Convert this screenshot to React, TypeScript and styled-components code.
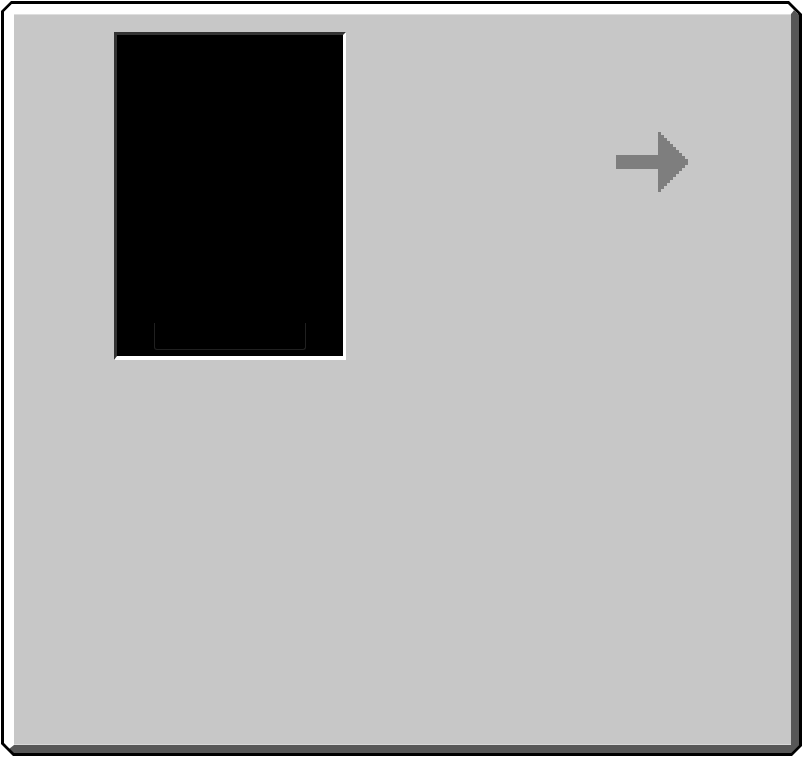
import styled, { createGlobalStyle } from "styled-components";

const GlobalStyle = createGlobalStyle`
  html, body {
    margin: 0;
    padding: 0;
    background: #ffffff;
    font-family: "Liberation Sans", Arial, sans-serif;
  }
`;

const Frame = styled.div`
  margin: 1px 0 0 1px;
  width: 801px;
  height: 755px;
  padding: 3px;
  box-sizing: border-box;
  background: #000000;
  clip-path: polygon(10px 0, calc(100% - 13px) 0, 100% 13px, 100% calc(100% - 10px), calc(100% - 10px) 100%, 12px 100%, 0 calc(100% - 12px), 0 10px);
`;

const Bevel = styled.div`
  width: 100%;
  height: 100%;
  box-sizing: border-box;
  border-style: solid;
  border-width: 10px 8px 8px 10px;
  border-color: #ffffff #575757 #575757 #ffffff;
  clip-path: polygon(8px 0, calc(100% - 11px) 0, 100% 11px, 100% calc(100% - 8px), calc(100% - 8px) 100%, 10px 100%, 0 calc(100% - 10px), 0 8px);
`;

const Panel = styled.div`
  width: 100%;
  height: 100%;
  box-sizing: border-box;
  background: #c7c7c7;
  border-top: 1px solid #dedede;
  border-bottom: 1px solid #d8d8d8;
  padding: 17px 0 0 100px;
  display: flex;
  align-items: flex-start;
`;

const Screen = styled.div`
  width: 232px;
  height: 328px;
  box-sizing: border-box;
  background: #000000;
  border-style: solid;
  border-width: 3px 3px 4px 3px;
  border-color: #333333 #ffffff #ffffff #333333;
  display: flex;
  flex-direction: column;
  justify-content: flex-end;
  align-items: center;
  padding-bottom: 6px;
`;

const Tray = styled.div`
  width: 152px;
  height: 27px;
  box-sizing: border-box;
  border: 1px solid #202020;
  border-top: none;
  border-radius: 0 0 3px 3px;
`;

const ArrowBox = styled.div`
  margin: 100px 0 0 270px;
  width: 74px;
  height: 60px;
  display: flex;
`;

// stepped arrow head, like a low-res bitmap
function arrowPoints() {
  const pts: string[] = ["0,23", "42,23", "42,0"];
  const step = 3;
  let x = 42;
  for (let y = 0; y < 30; y += step) {
    x += 3;
    pts.push(`${x},${y}`, `${x},${y + step}`);
  }
  for (let y = 30; y < 60; y += step) {
    pts.push(`${x},${y + step}`);
    x -= 3;
    pts.push(`${x},${y + step}`);
  }
  pts.push("42,60", "42,37", "0,37");
  return pts.join(" ");
}

export default function App() {
  return (
    <>
      <GlobalStyle />
      <Frame>
        <Bevel>
          <Panel>
            <Screen>
              <Tray />
            </Screen>
            <ArrowBox>
              <svg width="74" height="60" viewBox="0 0 74 60" shapeRendering="crispEdges">
                <polygon points={arrowPoints()} fill="#7e7e7e" />
              </svg>
            </ArrowBox>
          </Panel>
        </Bevel>
      </Frame>
    </>
  );
}
